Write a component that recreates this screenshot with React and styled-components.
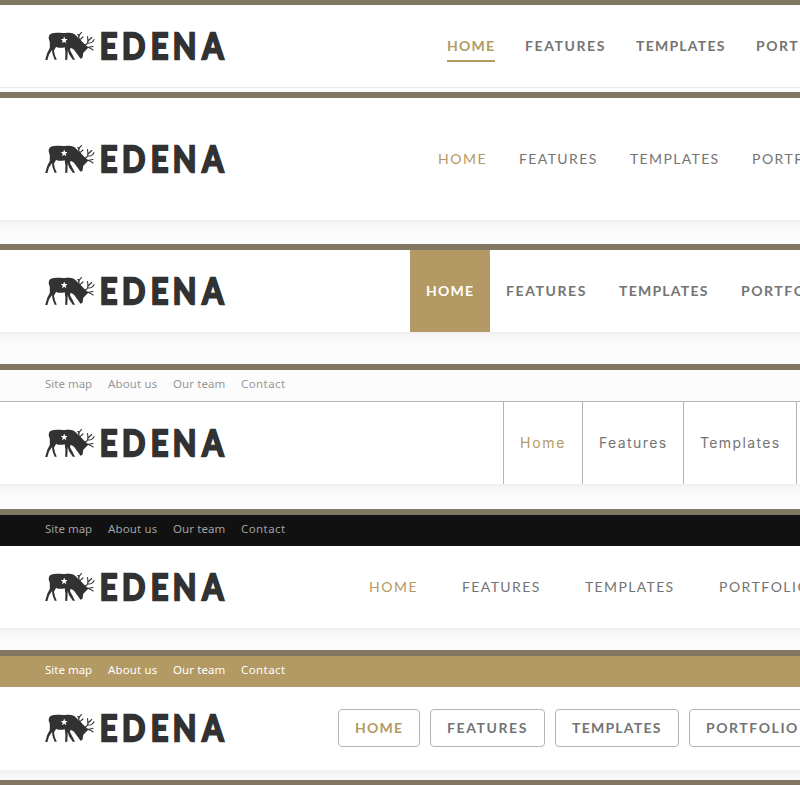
import React from "react";
import styled, { createGlobalStyle, css } from "styled-components";

const color = {
  bar: "#827762",
  gold: "#b39963",
  text: "#747474",
  line: "#b5b5b5",
  ink: "#323232",
};

const GlobalStyle = createGlobalStyle`
  *, *::before, *::after { box-sizing: border-box; }
  body { margin: 0; background: #fff; overflow: hidden; }
`;

const Page = styled.main`
  width: 800px;
  height: 785px;
  overflow: hidden;
  display: flex;
  flex-direction: column;
  background: #fff;
  font-family: Lato, "Liberation Sans", sans-serif;
`;

const Section = styled.section`
  flex: none;
  display: flex;
  flex-direction: column;
  height: ${(p) => p.$height}px;
  border-top: ${(p) => p.$bar ?? 6}px solid ${color.bar};
`;

const topTones = {
  light: css`
    background: #fcfcfc;
    color: #979797;
    height: 32px;
    border-bottom: 1px solid ${color.line};
  `,
  dark: css`
    background: #111;
    color: #a0a0a0;
  `,
  gold: css`
    background: ${color.gold};
    color: #fff;
  `,
};

const TopBar = styled.div`
  flex: none;
  display: flex;
  height: 31px;
  padding-left: 45px;
  font: 400 11.5px/28px "Noto Sans", sans-serif;
  ${(p) => topTones[p.$tone]}
`;

const TopLink = styled.a`
  flex: none;
  width: ${(p) => p.$width}px;
  letter-spacing: ${(p) => p.$tracking}px;
  white-space: nowrap;
`;

const Header = styled.header`
  flex: none;
  display: flex;
  align-items: center;
  height: ${(p) => p.$height}px;
  padding-bottom: ${(p) => p.$lift ?? 0}px;
  background: #fff;
`;

const LogoLink = styled.a`
  flex: none;
  display: flex;
  width: ${(p) => p.$space}px;
  padding-left: 43px;
`;

const Nav = styled.nav`
  flex: none;
  display: flex;
  align-self: stretch;
  align-items: center;
  gap: ${(p) => p.$gap}px;
`;

const itemStyles = {
  plain: css``,
  underline: css`
    height: 32px;
    border-bottom: 2px solid ${(p) => (p.$active ? color.gold : "transparent")};
    border-top: 2px solid transparent;
  `,
  block: css`
    align-self: stretch;
    padding: 0 16px;
    background: ${(p) => (p.$active ? color.gold : "transparent")};
    color: ${(p) => (p.$active ? "#fff" : color.text)};
  `,
  divided: css`
    align-self: stretch;
    padding: 0 16px;
    border-left: 1px solid ${color.line};
    font-family: Inter, sans-serif;
  `,
  boxed: css`
    height: 38px;
    padding: 0 16px;
    border: 1px solid ${color.line};
    border-radius: 4px;
  `,
};

const NavItem = styled.a`
  flex: none;
  display: flex;
  align-items: center;
  color: ${(p) => (p.$active ? color.gold : color.text)};
  font-size: 14px;
  line-height: 20px;
  font-weight: ${(p) => (p.$bold ? 700 : 400)};
  ${(p) => itemStyles[p.$kind]}
`;

const Label = styled.span`
  width: ${(p) => p.$width}px;
  letter-spacing: ${(p) => p.$tracking}px;
  white-space: nowrap;
`;

const Shade = styled.div`
  flex: 1;
  background: ${(p) =>
    p.$flat
      ? "linear-gradient(#ebebe9 1px, #fdfdfd 1px)"
      : "linear-gradient(#f0f0f0, #f7f7f7 5px, #fcfcfc 12px, #fdfdfd)"};
`;

const LogoSvg = styled.svg`
  display: block;
  width: 190px;
  height: 36px;
`;

const Wordmark = styled.text`
  font: 700 36.5px Lato, sans-serif;
  fill: ${color.ink};
  stroke: ${color.ink};
  stroke-width: 2.3px;
`;

function Logo() {
  return (
    <LogoSvg viewBox="0 0 190 36" aria-label="Edena">
      <g fill={color.ink}>
        <path d="M8.5 5.5C13 4 18 5.6 24 4.8C28 4.3 31 5 33.5 8C36 11 39 13.500 42 16.500L45.500 19.500L43 22L40.200 25L39.500 29.700L37.500 30.800L34.500 26.500C32.500 24 31 20.500 27.500 20L27 22L28.500 25L32 31.800H29.800L26 26.300L24.800 22L24.300 31.700L22.200 31.900L22.400 24L21.700 19.300C18 20.500 15 19.500 13 18.900L11 22.500L11.800 27L13.800 31.700H11.600L9.500 26L9 22L6 26.500L4.400 32H2.200L4.200 25L6.800 20L6.800 14L5.700 10.500C5.600 8 6.500 6.200 8.500 5.500Z" />
      </g>
      <path
        d="M39 16C39 12 34 11.500 36 7.500C36.500 6 38 5.500 38.500 4.600M36.300 8L34.800 6.500M36.700 11.800L40 9M41 17C46 17 45 12 44.500 8.500M45 13L48.700 9.500M45 15C48 15.200 50 14 51 11.600M42 18.500C46 20 48 20 50 22M45.500 19.300L50 18.500M38 15L34.700 12.500"
        fill="none"
        stroke={color.ink}
        strokeWidth="1.1"
        strokeLinecap="round"
      />
      <path
        d="M21.200 8.600L22.200 10.900L24.600 11.100L22.700 12.700L23.300 15.200L21.200 13.800L19.100 15.200L19.700 12.700L17.800 11.100L20.200 10.900Z"
        fill="#fff"
      />
      <Wordmark transform="scale(0.84 1)" x="67.700 94 128.300 154.600 189.500" y="31">
        EDENA
      </Wordmark>
    </LogoSvg>
  );
}

const boldWords = [
  ["HOME", 48, 1.25],
  ["FEATURES", 81, 1.6],
  ["TEMPLATES", 90, 1.25],
  ["PORTFOLIO", 93, 1.55],
];
const regularWords = [
  ["HOME", 49, 1.55],
  ["FEATURES", 79, 1.4],
  ["TEMPLATES", 90, 1.35],
  ["PORTFOLIO", 92, 1.5],
];
const mixedWords = [
  ["Home", 46, 1.75],
  ["Features", 68, 1.4],
  ["Templates", 80, 1.37],
  ["Portfolio", 76, 1.4],
];
const topLinks = [
  ["Site map", 63, 0],
  ["About us", 65, 0.15],
  ["Our team", 68, 0.1],
  ["Contact", 60, 0.42],
];

const variants = [
  { height: 92, bar: 5, header: 82, start: 447, gap: 30, kind: "underline", words: boldWords, bold: true, flat: true },
  { height: 152, header: 122, start: 438, gap: 32, kind: "plain", words: regularWords },
  { height: 120, header: 82, start: 410, gap: 0, kind: "block", words: boldWords, bold: true },
  { height: 145, header: 82, start: 503, gap: 0, kind: "divided", words: mixedWords, top: "light" },
  { height: 141, header: 82, start: 369, gap: 44, kind: "plain", words: regularWords, top: "dark" },
  { height: 130, header: 83, lift: 1, start: 338, gap: 10, kind: "boxed", words: boldWords, bold: true, top: "gold" },
];

function HeaderVariant({ v }) {
  return (
    <Section $height={v.height} $bar={v.bar}>
      {v.top && (
        <TopBar $tone={v.top}>
          {topLinks.map(([label, width, tracking]) => (
            <TopLink key={label} $width={width} $tracking={tracking}>{label}</TopLink>
          ))}
        </TopBar>
      )}
      <Header $height={v.header} $lift={v.lift}>
        <LogoLink $space={v.start}>
          <Logo />
        </LogoLink>
        <Nav $gap={v.gap}>
          {v.words.map(([label, width, tracking], i) => (
            <NavItem key={label} $kind={v.kind} $bold={v.bold} $active={i === 0}>
              <Label $width={width} $tracking={tracking}>{label}</Label>
            </NavItem>
          ))}
        </Nav>
      </Header>
      <Shade $flat={v.flat} />
    </Section>
  );
}

export default function App() {
  return (
    <>
      <GlobalStyle />
      <Page>
        {variants.map((v) => (
          <HeaderVariant key={v.start} v={v} />
        ))}
        <Section $height={5} />
      </Page>
    </>
  );
}
